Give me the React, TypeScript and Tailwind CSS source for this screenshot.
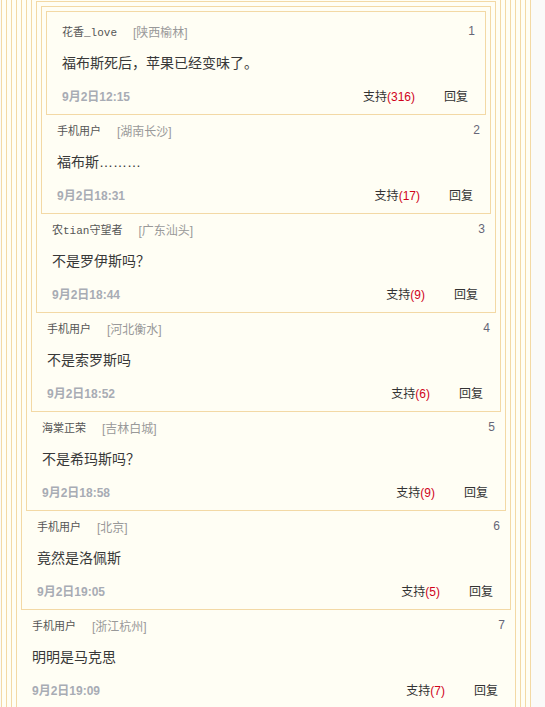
import React from 'react';

type Floor = {
    user: string;
    location: string;
    text: string;
    time: string;
    votes: number;
};

const floors: Floor[] = [
    { user: '花香_love', location: '[陕西榆林]', text: '福布斯死后，苹果已经变味了。', time: '9月2日12:15', votes: 316 },
    { user: '手机用户', location: '[湖南长沙]', text: '福布斯………', time: '9月2日18:31', votes: 17 },
    { user: '农tian守望者', location: '[广东汕头]', text: '不是罗伊斯吗？', time: '9月2日18:44', votes: 9 },
    { user: '手机用户', location: '[河北衡水]', text: '不是索罗斯吗', time: '9月2日18:52', votes: 6 },
    { user: '海棠正荣', location: '[吉林白城]', text: '不是希玛斯吗？', time: '9月2日18:58', votes: 9 },
    { user: '手机用户', location: '[北京]', text: '竟然是洛佩斯', time: '9月2日19:05', votes: 5 },
    { user: '手机用户', location: '[浙江杭州]', text: '明明是马克思', time: '9月2日19:09', votes: 7 },
];

// outer floors whose content lies below the fold
const OUTER_FLOORS = 3;

const sans = "font-['Liberation_Sans','Noto_Sans_CJK_SC',sans-serif]";

function FloorContent({ floor, no }: { floor: Floor; no: number }) {
    return (
        <div className={`pt-[7px] pb-[3px] pl-[11px] pr-[6px] ${sans}`}>
            {/* name row */}
            <div className="h-[20px] flex items-center justify-between text-[12px]">
                <div className="flex items-center">
                    <span className="text-[#555] font-['Liberation_Mono','Noto_Sans_CJK_SC',monospace] text-[11px]">{floor.user}</span>
                    <span className="ml-[16px] text-[#999]">{floor.location}</span>
                </div>
                <span className="text-[#667] -mt-[4px]">{no}</span>
            </div>

            {/* body */}
            <div className="mt-[10px] h-[20px] flex items-center text-[14px] text-[#383838]">{floor.text}</div>

            {/* actions */}
            <div className="mt-[14px] h-[20px] flex items-center justify-between pr-[7px] text-[12px]">
                <span className="font-bold text-[#a8acb4]">{floor.time}</span>
                <div className="flex items-center gap-[29px] text-[#333]">
                    <span>
                        支持<span className="text-[#d0021b]">({floor.votes})</span>
                    </span>
                    <span>回复</span>
                </div>
            </div>
        </div>
    );
}

function FloorBox({ index }: { index: number }) {
    return (
        <div className="border border-[#f3d9a5] bg-[#fffef4] p-[4px]">
            {index > 0 && <FloorBox index={index - 1} />}
            <FloorContent floor={floors[index]} no={index + 1} />
        </div>
    );
}

function OuterBox({ depth }: { depth: number }) {
    if (depth === 0) return <FloorBox index={floors.length - 1} />;
    return (
        <div className="border border-[#f3d9a5] bg-[#fffef4] p-[4px]">
            <OuterBox depth={depth - 1} />
            <div className="h-[60px]" />
        </div>
    );
}

export default function App() {
    return (
        <div className="h-screen bg-[#fafaf9] overflow-hidden">
            <div className="w-[530px] ml-[1px] -mt-[34px]">
                <OuterBox depth={OUTER_FLOORS} />
            </div>
        </div>
    );
}
